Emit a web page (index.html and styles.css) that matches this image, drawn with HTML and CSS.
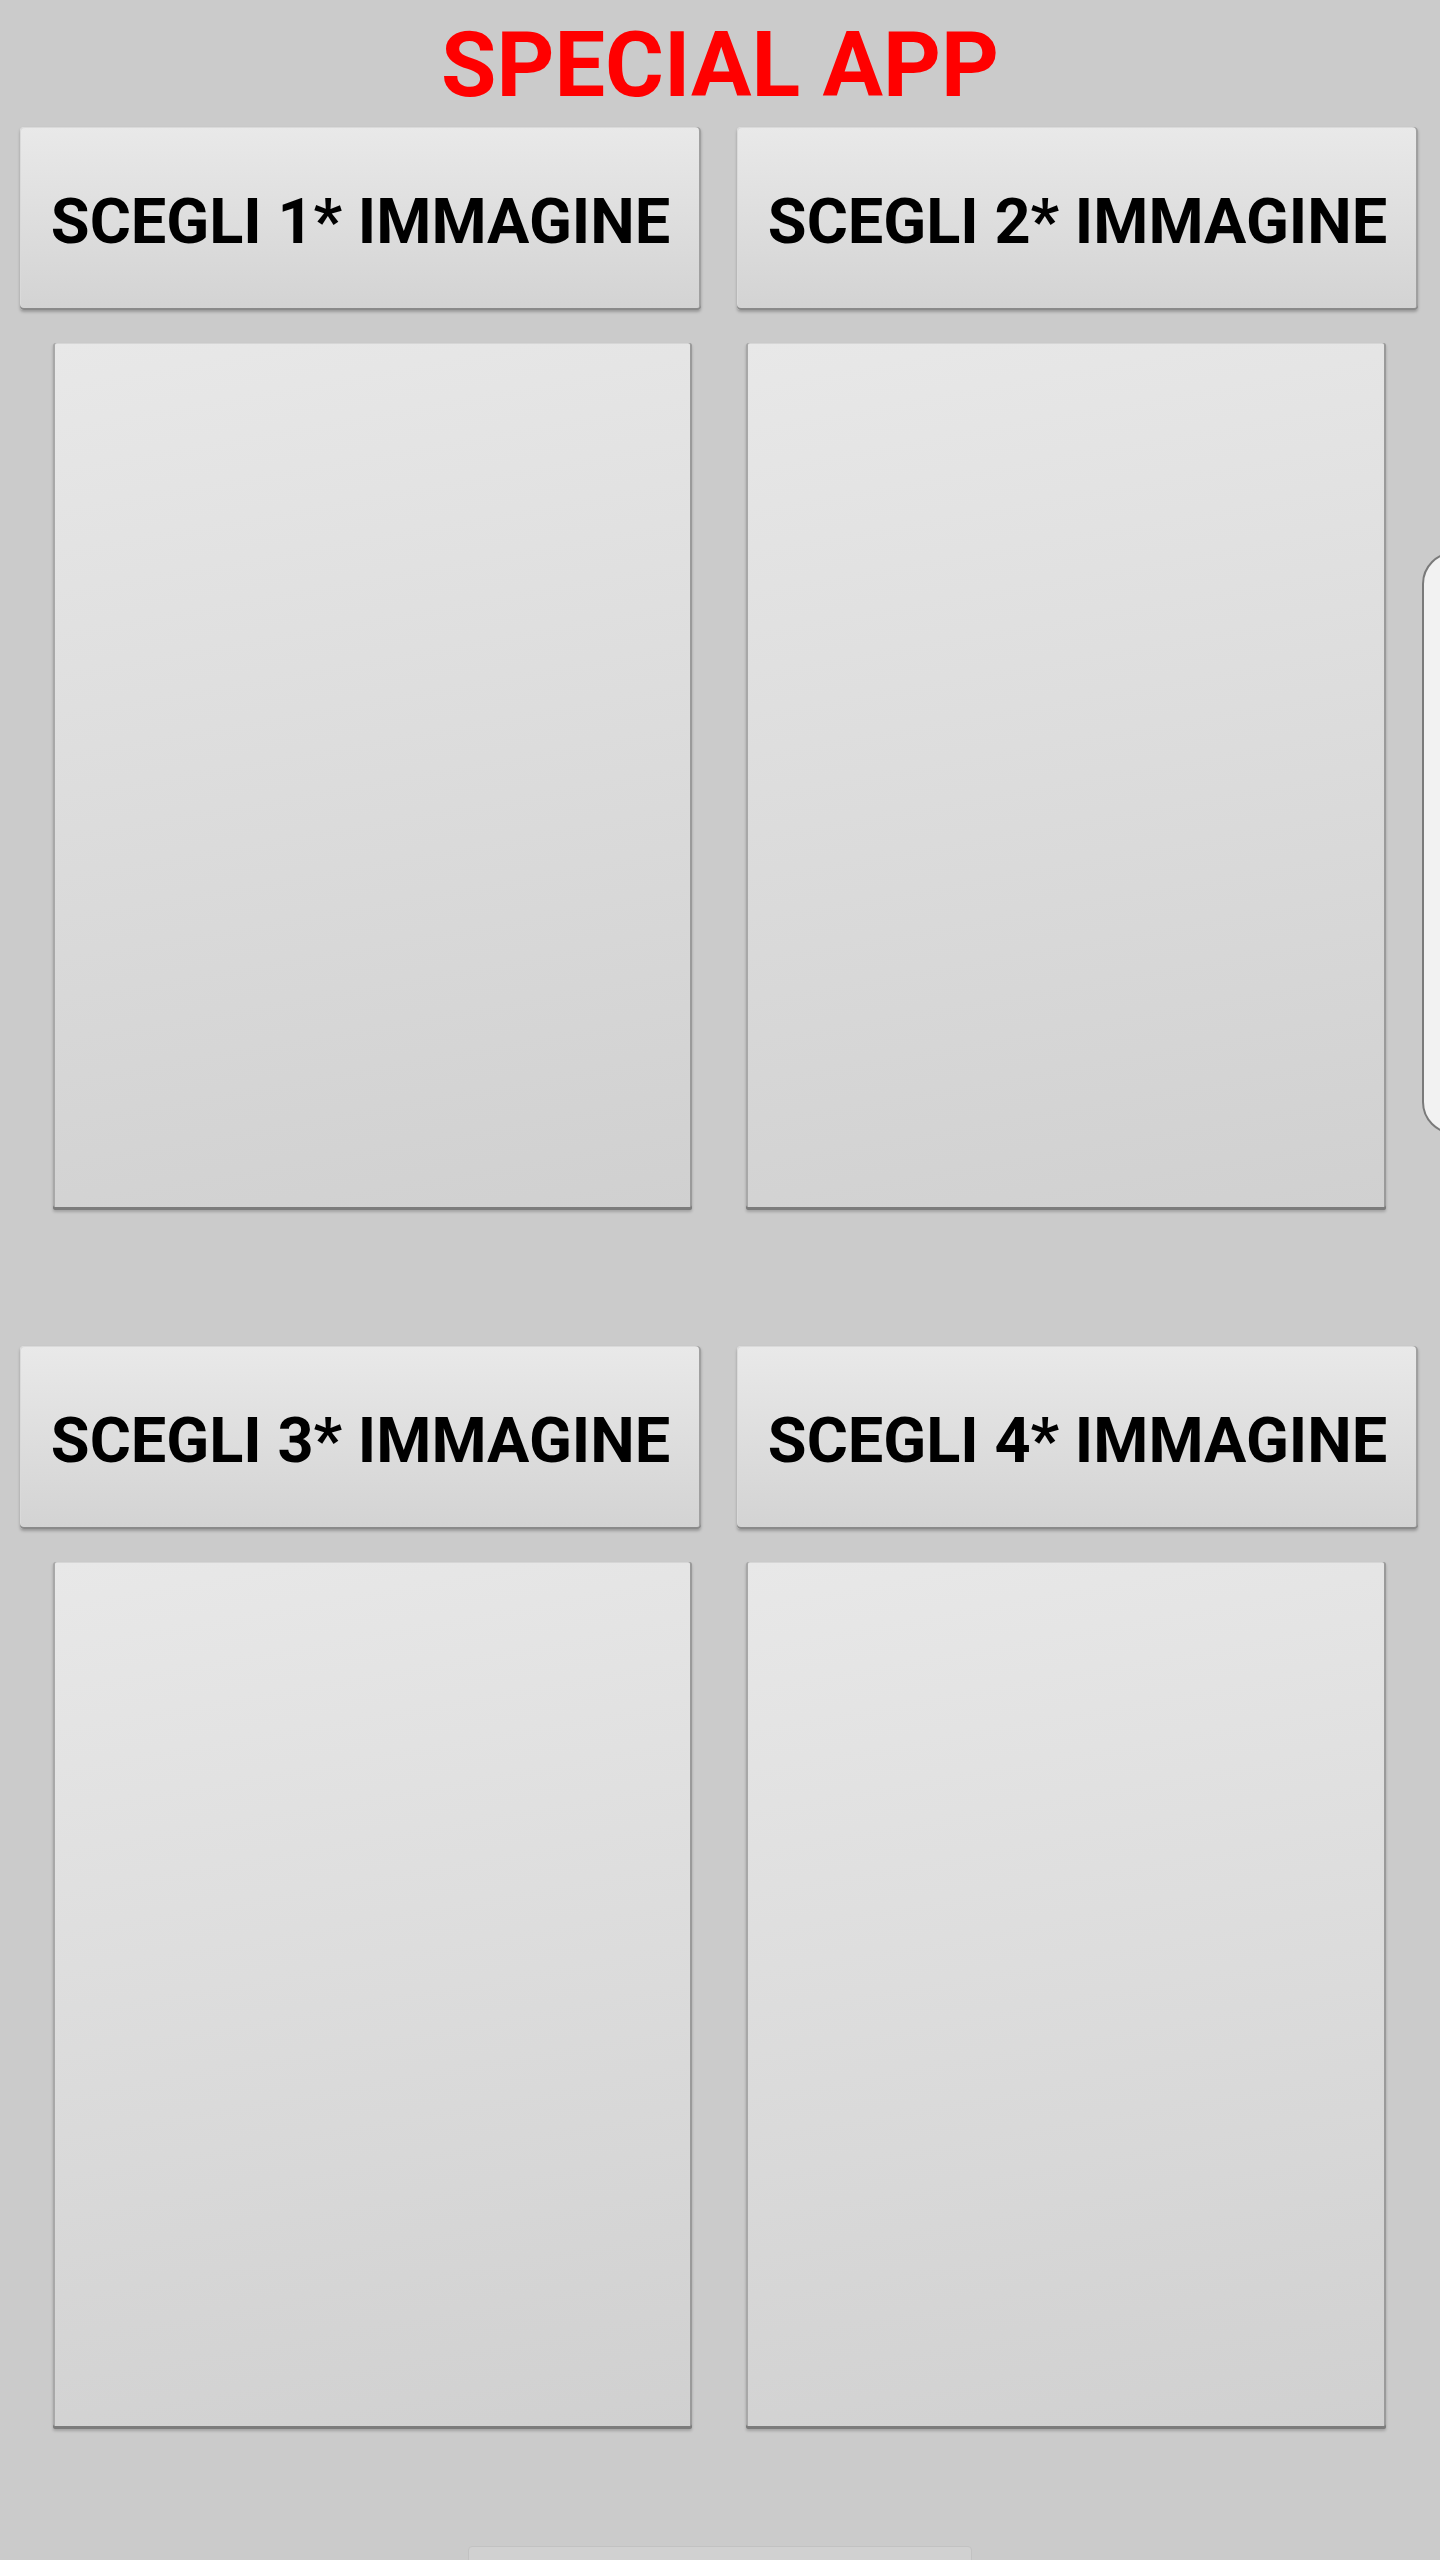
FILE: index.html
```html
<!DOCTYPE html>
<html lang="it">
<head>
  <meta charset="UTF-8" />
  <meta name="viewport" content="width=device-width, initial-scale=1.0" />
  <title>Special App</title>
  <link rel="stylesheet" href="styles.css">
</head>
<body>
<h1 class="title">SPECIAL APP</h1>

<main class="grid">
  <section class="slot slot-left">
    <button class="pick">SCEGLI 1* IMMAGINE</button>
    <div class="preview"></div>
  </section>
  <section class="slot slot-right">
    <button class="pick">SCEGLI 2* IMMAGINE</button>
    <div class="preview"></div>
  </section>
  <section class="slot slot-left">
    <button class="pick">SCEGLI 3* IMMAGINE</button>
    <div class="preview"></div>
  </section>
  <section class="slot slot-right">
    <button class="pick">SCEGLI 4* IMMAGINE</button>
    <div class="preview"></div>
  </section>
</main>

<div class="edge-handle"></div>
<div class="home-bar"></div>
</body>
</html>
```

FILE: styles.css
```css
html, body {
  margin: 0;
  padding: 0;
}
body {
  background: #cbcbcb;
  font-family: Roboto, "Noto Sans", sans-serif;
  min-height: 2560px;
  position: relative;
  overflow: hidden;
}
.title {
  margin: 0;
  height: 127px;
  line-height: 131px;
  font-size: 90px;
  font-weight: 700;
  color: #ff0000;
  text-align: center;
}
.grid {
  display: grid;
  grid-template-columns: 681px 681px;
  column-gap: 36px;
  row-gap: 136px;
  padding: 0 22px 0 20px;
}
.slot {
  display: flex;
  flex-direction: column;
}
.pick {
  height: 183px;
  margin: 0;
  padding: 6px 0 0;
  border: none;
  border-radius: 4px;
  background: linear-gradient(to bottom, #e9e9e9, #d3d3d3);
  box-shadow: inset 0 -2px 0 #8a8a8a, inset -2px 0 0 #a0a0a0, inset 1px 1px 0 #dadada, 0 2px 3px rgba(0,0,0,0.25);
  font-family: Roboto, "Noto Sans", sans-serif;
  font-size: 63px;
  font-weight: 700;
  color: #000;
  cursor: pointer;
}
.preview {
  height: 867px;
  margin-top: 33px;
  border-radius: 2px;
  background: linear-gradient(170deg, #e8e8e8, #d0d0d0);
  box-shadow: inset 0 -3px 0 #7c7c7c, inset -2px 0 0 #9a9a9a, inset 2px 0 0 #a8a8a8, inset 0 1px 0 #d6d6d6, 0 2px 3px rgba(0,0,0,0.2);
}
.slot-left .preview {
  margin-left: 33px;
  margin-right: 9px;
}
.slot-right .preview {
  margin-left: 9px;
  margin-right: 32px;
}
.edge-handle {
  position: absolute;
  top: 552px;
  left: 1422px;
  width: 40px;
  height: 578px;
  background: #f2f2f2;
  border: 2px solid #7a7a7a;
  border-radius: 32px 0 0 32px;
}
.home-bar {
  position: absolute;
  top: 2546px;
  left: 468px;
  width: 502px;
  height: 30px;
  background: #d1d1d1;
  border: 1px solid #c2c2c2;
  border-radius: 4px;
}
```
